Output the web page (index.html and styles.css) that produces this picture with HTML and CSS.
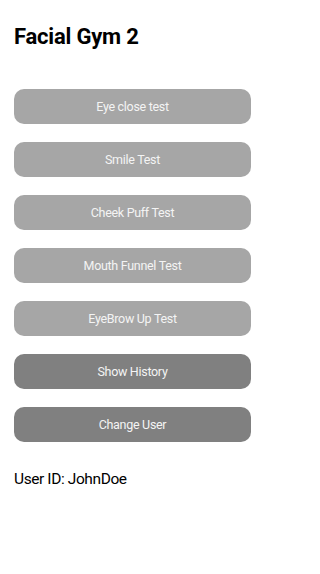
FILE: index.html
```html
<!DOCTYPE html>
<html>
<head>
<meta charset="utf-8">
<link rel="stylesheet" href="styles.css">
</head>
<body>
<div class="screen">
  <h1 class="title">Facial Gym 2</h1>
  <div class="buttons">
    <div class="btn light">Eye close test</div>
    <div class="btn light">Smile Test</div>
    <div class="btn light">Cheek Puff Test</div>
    <div class="btn light">Mouth Funnel Test</div>
    <div class="btn light">EyeBrow Up Test</div>
    <div class="btn dark">Show History</div>
    <div class="btn dark">Change User</div>
  </div>
  <div class="user">User ID: JohnDoe</div>
</div>
</body>
</html>
```
FILE: styles.css
```css
html, body {
  margin: 0;
  padding: 0;
  background: #ffffff;
}
.screen {
  width: 265px;
  height: 574px;
  padding: 0 14px;
  box-sizing: border-box;
  font-family: Roboto, "Liberation Sans", sans-serif;
}
.title {
  margin: 0;
  padding-top: 23px;
  font-size: 22px;
  line-height: 28px;
  font-weight: 700;
  color: #000;
  letter-spacing: -0.2px;
}
.buttons {
  margin-top: 38px;
  display: flex;
  flex-direction: column;
  gap: 18px;
}
.btn {
  height: 35px;
  border-radius: 10px;
  display: flex;
  align-items: center;
  justify-content: center;
  color: #f4f4f4;
  font-size: 12.5px;
  letter-spacing: -0.3px;
}
.light { background: #a6a6a6; }
.dark { background: #808080; }
.user {
  margin-top: 27px;
  font-size: 15.5px;
  line-height: 20px;
  color: #000;
  letter-spacing: -0.4px;
}
```
